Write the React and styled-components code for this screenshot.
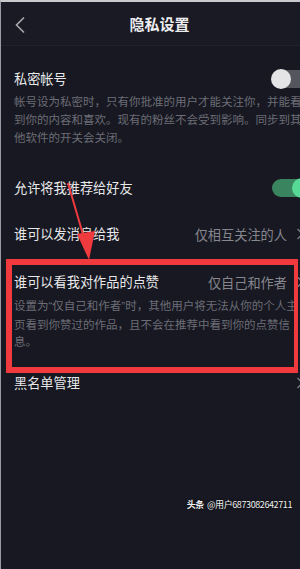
import React from "react";
import styled, { createGlobalStyle } from "styled-components";

const GlobalStyle = createGlobalStyle`
  html, body {
    margin: 0;
    padding: 0;
    height: 100%;
    overflow: hidden;
    background: #171821;
  }
  #root {
    height: 100%;
  }
`;

const Screen = styled.div`
  position: relative;
  width: 318px;
  height: 569px;
  background: #171821;
  border-top: 2px solid #c9c9ce;
  border-left: 1px solid #9a9aa2;
  box-sizing: border-box;
  font-family: "Noto Sans CJK SC", "Noto Sans", sans-serif;
  color: #e8e8ea;
  overflow: hidden;
`;

const Header = styled.div`
  height: 43px;
  display: flex;
  align-items: center;
  justify-content: center;
  position: relative;
  border-bottom: 1px solid #22232c;
  background: #191a24;
`;

const BackButton = styled.div`
  position: absolute;
  left: 13px;
  top: 14px;
  display: flex;
`;

const Title = styled.div`
  font-size: 15px;
  font-weight: 700;
  color: #ececee;
`;

const List = styled.div`
  display: flex;
  flex-direction: column;
  padding: 0 0 0 13px;
`;

const Item = styled.div`
  position: relative;
  display: flex;
  flex-direction: column;
  margin-top: ${(p) => p.$top}px;
`;

const Row = styled.div`
  display: flex;
  align-items: center;
  height: 20px;
  padding-right: ${(p) => (p.$toggle ? 6 : 14)}px;
`;

const Label = styled.div`
  flex: 1;
  font-size: 13.2px;
  line-height: 20px;
  white-space: nowrap;
`;

const Value = styled.div`
  font-size: 13.2px;
  color: #85868e;
  white-space: nowrap;
  display: flex;
  align-items: center;
  gap: 9px;
`;

const Desc = styled.div`
  margin-top: ${(p) => p.$gap}px;
  font-size: 11.5px;
  line-height: ${(p) => p.$lh}px;
  color: #6c6d76;
  white-space: nowrap;
`;

const Quote = styled.span`
  font-family: "Liberation Sans", sans-serif;
`;

const Track = styled.div`
  width: 40px;
  height: 18px;
  border-radius: 9px;
  background: ${(p) => (p.$on ? "#3a8560" : "#55565d")};
  position: relative;
`;

const Knob = styled.div`
  position: absolute;
  top: -1px;
  left: ${(p) => (p.$on ? "20px" : "-1px")};
  width: 20px;
  height: 20px;
  border-radius: 50%;
  background: ${(p) => (p.$on ? "#55d995" : "#e4e4e6")};
`;

const Highlight = styled.div`
  position: absolute;
  left: -8px;
  top: -13px;
  width: 292px;
  height: 114px;
  border: 6px solid #f03a3e;
  border-right-width: 4px;
  box-sizing: border-box;
  pointer-events: none;
`;

const Arrow = styled.svg`
  position: absolute;
  left: 0;
  top: 0;
  pointer-events: none;
`;

const Watermark = styled.div`
  position: absolute;
  right: 26px;
  top: 496px;
  font-size: 9px;
  letter-spacing: -0.4px;
  color: #f2f2f2;
  white-space: nowrap;
  text-shadow: 0 0 2px rgba(0, 0, 0, 0.8);
  b {
    font-weight: 700;
    margin-right: 3px;
  }
`;

const Chevron = () => (
  <svg width="8" height="12" viewBox="0 0 8 12">
    <path d="M1.5 1 L6.5 6 L1.5 11" fill="none" stroke="#7b7c84" strokeWidth="1.3" />
  </svg>
);

const Toggle = ({ on }) => (
  <Track $on={on}>
    <Knob $on={on} />
  </Track>
);

export default function App() {
  return (
    <>
      <GlobalStyle />
      <Screen>
        <Header>
          <BackButton>
            <svg width="12" height="18" viewBox="0 0 12 18">
              <path d="M10 1.5 L2.5 9 L10 16.5" fill="none" stroke="#a9aab0" strokeWidth="1.6" />
            </svg>
          </BackButton>
          <Title>隐私设置</Title>
        </Header>

        <List>
          <Item $top={23}>
            <Row $toggle>
              <Label>私密帐号</Label>
              <Toggle on={false} />
            </Row>
            <Desc $gap={3} $lh={18}>
              帐号设为私密时，只有你批准的用户才能关注你，并能看
              <br />
              到你的内容和喜欢。现有的粉丝不会受到影响。同步到其
              <br />
              他软件的开关会关闭。
            </Desc>
          </Item>

          <Item $top={32}>
            <Row $toggle>
              <Label>允许将我推荐给好友</Label>
              <Toggle on />
            </Row>
          </Item>

          <Item $top={26}>
            <Row>
              <Label>谁可以发消息给我</Label>
              <Value>
                仅相互关注的人<Chevron />
              </Value>
            </Row>
          </Item>

          <Item $top={28}>
            <Row>
              <Label>谁可以看我对作品的点赞</Label>
              <Value>
                仅自己和作者<Chevron />
              </Value>
            </Row>
            <Desc $gap={5} $lh={17.5}>
              设置为<Quote>“</Quote>仅自己和作者<Quote>”</Quote>时，其他用户将无法从你的个人主
              <br />
              页看到你赞过的作品，且不会在推荐中看到你的点赞信
              <br />
              息。
            </Desc>
            <Highlight />
          </Item>

          <Item $top={22}>
            <Row>
              <Label>黑名单管理</Label>
              <Value>
                <Chevron />
              </Value>
            </Row>
          </Item>
        </List>

        <Arrow width="318" height="569" viewBox="0 0 318 569">
          <line x1="67" y1="181" x2="83" y2="236" stroke="#ef3a3e" strokeWidth="2" />
          <polygon points="76,232 94,229 88,258" fill="#ef3a3e" />
        </Arrow>

        <Watermark>
          <b>头条</b>@用户6873082642711
        </Watermark>
      </Screen>
    </>
  );
}
